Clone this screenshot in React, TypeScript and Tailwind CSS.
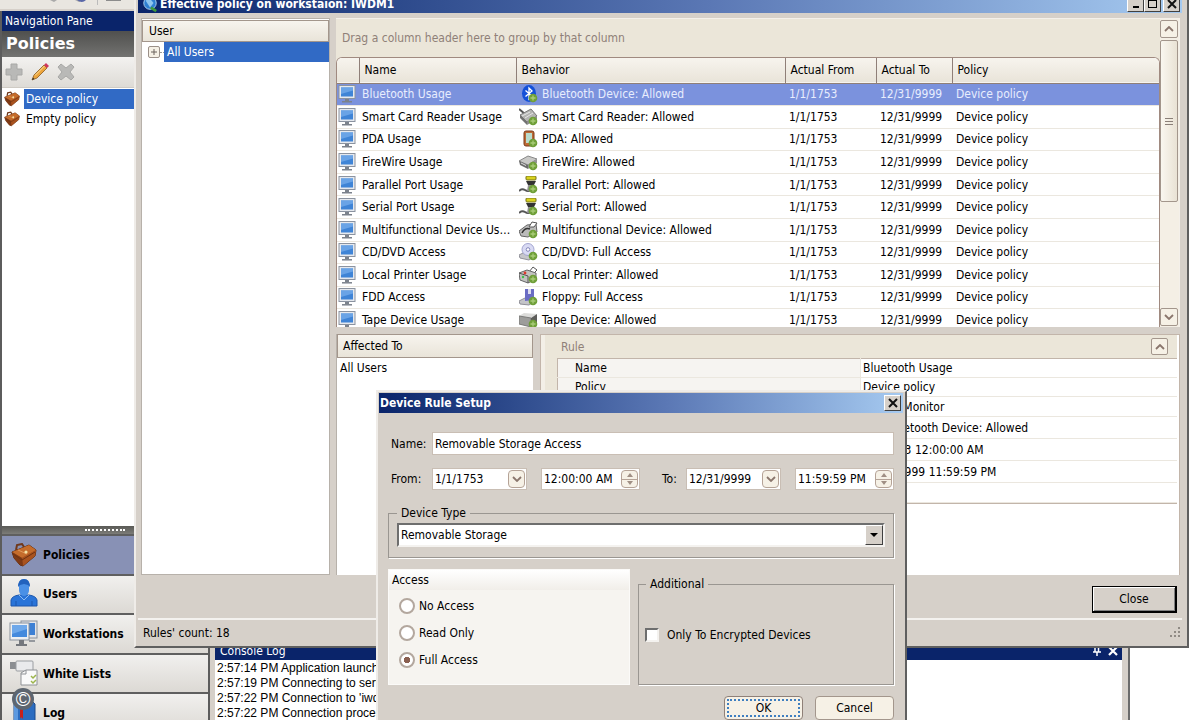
import { ReactNode, useState } from "react";

type DeviceKind =
  | "bluetooth"
  | "card"
  | "pda"
  | "firewire"
  | "port"
  | "multi"
  | "disc"
  | "printer"
  | "floppy"
  | "tape";

interface IRule {
  name: string;
  kind: DeviceKind;
  behavior: string;
}

const rules: IRule[] = [
  { name: "Bluetooth Usage", kind: "bluetooth", behavior: "Bluetooth Device: Allowed" },
  { name: "Smart Card Reader Usage", kind: "card", behavior: "Smart Card Reader: Allowed" },
  { name: "PDA Usage", kind: "pda", behavior: "PDA: Allowed" },
  { name: "FireWire Usage", kind: "firewire", behavior: "FireWire: Allowed" },
  { name: "Parallel Port Usage", kind: "port", behavior: "Parallel Port: Allowed" },
  { name: "Serial Port Usage", kind: "port", behavior: "Serial Port: Allowed" },
  { name: "Multifunctional Device Usage", kind: "multi", behavior: "Multifunctional Device: Allowed" },
  { name: "CD/DVD Access", kind: "disc", behavior: "CD/DVD: Full Access" },
  { name: "Local Printer Usage", kind: "printer", behavior: "Local Printer: Allowed" },
  { name: "FDD Access", kind: "floppy", behavior: "Floppy: Full Access" },
  { name: "Tape Device Usage", kind: "tape", behavior: "Tape Device: Allowed" },
];

interface IDetail {
  label: string;
  value: string;
  height: string;
  icon?: DeviceKind;
}

const details: IDetail[] = [
  { label: "Name", value: "Bluetooth Usage", height: "h-[19px]" },
  { label: "Policy", value: "Device policy", height: "h-[19px]" },
  { label: "", value: "Device Monitor", height: "h-5" },
  { label: "", value: "Bluetooth Device: Allowed", height: "h-[22px]", icon: "bluetooth" },
  { label: "", value: "1/1/1753 12:00:00 AM", height: "h-[22px]" },
  { label: "", value: "12/31/9999 11:59:59 PM", height: "h-[22px]" },
  { label: "", value: "", height: "h-5" },
];

const logLines = [
  "2:57:14 PM Application launched",
  "2:57:19 PM Connecting to server",
  "2:57:22 PM Connection to 'iwdm1'",
  "2:57:22 PM Connection process",
];

function Briefcase({ className }: { className: string }) {
  return (
    <svg viewBox="0 0 26 24" className={className} aria-hidden="true">
      <path d="M1 9 L18 2 L25 7 L24 13 L12 23 L9 22 L3 15 Z" fill="#9a4a1c" stroke="#5f2c12" />
      <path d="M1 9 L18 2 L25 7 L11 15 Z" fill="#c46c2c" />
      <path d="M11 15 L25 7 L24 13 L12 23 Z" fill="#a9531f" />
      <path d="M1 9 L11 15 L12 23 L9 22 L3 15 Z" fill="#7f3a15" />
      <path d="M5 7 L6 2 L11 1 L13 4" fill="none" stroke="#70381a" strokeWidth="2" />
      <path d="M2 11 L11 17 L24 9" fill="none" stroke="#6d3212" />
      <path d="M7 7 L16 11" stroke="#e19a5a" />
      <circle cx="15" cy="9" r="1.6" fill="#f3e2a6" />
    </svg>
  );
}

function Monitor() {
  return (
    <svg viewBox="0 0 18 18" className="ml-px h-[18px] w-[18px]" aria-hidden="true">
      <rect x="1" y="0.5" width="16" height="13" fill="#e6e9ee" stroke="#8b93a0" />
      <rect x="3" y="2.5" width="12" height="9" fill="#3f84d6" />
      <path d="M3 2.5h12v3L3 9z" fill="#69a3e6" />
      <path d="M7 14h4v2H7z" fill="#7c828c" />
      <path d="M4 16.8h10" stroke="#7c828c" strokeWidth="1.5" />
    </svg>
  );
}

function DeviceIcon({ kind }: { kind: DeviceKind }) {
  return (
    <svg viewBox="0 0 19 18" className="h-[18px] w-[19px] shrink-0" aria-hidden="true">
      {kind === "bluetooth" && (
        <>
          <ellipse cx="10" cy="8.5" rx="7" ry="8.5" fill="#1450d8" />
          <path d="M6.5 5.5 L13 11 L10 14 V3 L13 6 L6.5 11.5" fill="none" stroke="#fff" strokeWidth="1.3" />
        </>
      )}
      {kind === "card" && (
        <>
          <path d="M0 1 L6 6" stroke="#555" strokeWidth="2" />
          <path d="M1 7 L12 1 L18 8 L8 14 Z" fill="#b4b4b2" stroke="#777" />
          <path d="M3 8 L11 4 M6 10 L14 5" stroke="#e6e6e6" />
          <path d="M1 7 L8 14 V17 L1 10 Z" fill="#727272" />
          <path d="M8 14 L18 8 V11 L8 17 Z" fill="#8d8d8b" />
        </>
      )}
      {kind === "pda" && (
        <>
          <rect x="5" y="1" width="10" height="15" rx="2" fill="#bd6a35" stroke="#7a3b1a" />
          <rect x="7" y="3" width="6" height="10" fill="#b9dccd" />
        </>
      )}
      {kind === "firewire" && (
        <>
          <path d="M0 8 L9 3 L18 6 L9 12 Z" fill="#c9c9c7" stroke="#888" />
          <path d="M0 8 L9 12 V16 L1 12 Z" fill="#6b6b6b" />
          <path d="M9 12 L18 6 V10 L9 16 Z" fill="#949494" />
          <path d="M2 10 L7 12.5" stroke="#ddd" />
        </>
      )}
      {kind === "port" && (
        <>
          <path d="M0 15 Q3 12 6 14 T12 14" fill="none" stroke="#555" strokeWidth="2" />
          <rect x="7" y="0" width="10" height="4" rx="1" fill="#d8d21e" stroke="#77731a" />
          <path d="M7 5 H17 L15 9 H9 Z" fill="#333" />
          <path d="M9 9 H15 L16 15 H8 Z" fill="#8e8e8e" />
        </>
      )}
      {kind === "multi" && (
        <>
          <path d="M0 10 L8 4 L17 3 L18 11 L9 16 L2 15 Z" fill="#bbb" stroke="#666" />
          <path d="M10 6 L13 1 L18 2 L15 6 Z" fill="#fff" stroke="#555" />
          <path d="M3 12 Q6 6 11 8" fill="none" stroke="#333" strokeWidth="1.6" />
        </>
      )}
      {kind === "disc" && (
        <>
          <path d="M0 12 L6 9 L17 12 L10 17 L1 15 Z" fill="#c6c6ca" stroke="#92929a" />
          <circle cx="9" cy="6.5" r="6" fill="#d9daf3" stroke="#a3a5cf" />
          <circle cx="9" cy="6.5" r="1.8" fill="#fff" stroke="#8284b8" />
        </>
      )}
      {kind === "printer" && (
        <>
          <path d="M10 6 L14 1 L18 4 L14 8 Z" fill="#fff" stroke="#555" />
          <path d="M0 7 L8 4 L17 7 V13 L9 17 L1 14 Z" fill="#c2c2c0" stroke="#666" />
          <path d="M0 7 L9 10 V17" fill="none" stroke="#555" />
          <circle cx="6" cy="7" r="1.4" fill="#e03a2c" />
          <circle cx="4" cy="11" r="1.2" fill="#3fbf4a" />
        </>
      )}
      {kind === "floppy" && (
        <>
          <path d="M0 13 L6 10 L17 12 L10 17 L1 16 Z" fill="#c4c4c8" stroke="#8f8f96" />
          <path d="M6 1 L15 1 V12 L6 13 Z" fill="#6a6cc4" />
          <path d="M9 1 H12 V6 H9 Z" fill="#dcdcee" />
        </>
      )}
      {kind === "tape" && (
        <>
          <path d="M0 5 L5 2 L18 3 L12 7 Z" fill="#dcdcda" />
          <path d="M0 5 L12 7 V16 L0 13 Z" fill="#9d9d9b" stroke="#7b7b79" />
          <path d="M12 7 L18 3 V13 L12 16 Z" fill="#5d5d5b" />
        </>
      )}
      <circle cx="14" cy="13" r="4.3" fill="#6f9f38" />
      <path d="M11.5 13 H16.5 M14 10.5 V15.500" stroke="#a9cc78" strokeWidth="1.3" />
    </svg>
  );
}

function Chevron({ up = false }: { up?: boolean }) {
  return (
    <svg viewBox="0 0 10 6" className="h-1.5 w-2.5" aria-hidden="true">
      <path d={up ? "M1 5 L5 1 L9 5" : "M1 1 L5 5 L9 1"} fill="none" stroke="#8a766c" strokeWidth="1.8" />
    </svg>
  );
}

function NavIcon({ label }: { label: string }) {
  if (label === "Policies") return <Briefcase className="ml-0.5 h-6 w-[26px]" />;
  return (
    <svg viewBox="0 0 30 30" className="h-[30px] w-[30px]" aria-hidden="true">
      {label === "Users" && (
        <>
          <path d="M2 27 V21 Q3 17 10 16 H20 Q27 17 28 21 V27 Z" fill="#2a74d8" stroke="#1c57ad" />
          <path d="M10 6 Q10 0 15 0 Q20 0 20 6 V12 Q19 17 15 17 Q11 17 10 12 Z" fill="#4a90e6" />
          <path d="M9 8 Q9 0 15 0 Q21 0 21 8 L19 6 L15 5 L11 6 Z" fill="#2262bd" />
          <path d="M10 16 L15 21 L20 16" fill="none" stroke="#8dbcf3" />
          <path d="M7 22 V27 M23 22 V27" stroke="#1c57ad" />
        </>
      )}
      {label === "Workstations" && (
        <>
          <rect x="12" y="2" width="16" height="17" fill="#e2e5ea" stroke="#8a919c" />
          <rect x="14" y="4" width="12" height="12" fill="#3d80d4" />
          <rect x="1" y="4" width="19" height="17" fill="#eceff3" stroke="#8a919c" />
          <rect x="3" y="6" width="15" height="12" fill="#4389dd" />
          <path d="M3 6h15v4L3 15z" fill="#6ea8ea" />
          <path d="M10 21h5v4h-5z M7 25h11v2H7z" fill="#74777c" />
          <path d="M20 21h6v2h-6z" fill="#95989d" />
        </>
      )}
      {label === "White Lists" && (
        <>
          <rect x="1" y="3" width="6" height="7" fill="#8b8e92" />
          <rect x="7" y="2" width="17" height="10" rx="1" fill="#e9eaec" stroke="#9a9da1" />
          <path d="M12 14 L17 11 H28 V26 H12 Z" fill="#fafafa" stroke="#8f9296" />
          <path d="M17 11 V15 H12" fill="none" stroke="#8f9296" />
          <path d="M22 17 l2 2 l3 -3 M22 22 l2 2 l3 -3" fill="none" stroke="#9cb44b" strokeWidth="1.5" />
        </>
      )}
      {label === "Log" && (
        <>
          <path d="M5 4 L24 4 L26 6 V30 H5 Z" fill="#2b6cc0" stroke="#1d4a8c" />
          <path d="M5 4 V30 H9 V4 Z" fill="#5c99e0" />
          <path d="M11 8 h3 v13 l-2 -2 l-1 2 Z" fill="#c8201c" />
        </>
      )}
    </svg>
  );
}

function CloseGlyph() {
  return (
    <svg viewBox="0 0 10 10" className="h-2.5 w-2.5" aria-hidden="true">
      <path d="M1 1 L9 9 M9 1 L1 9" stroke="#111" strokeWidth="2" />
    </svg>
  );
}

function CaptionButton({ label, children }: { label: string; children: ReactNode }) {
  return (
    <button
      type="button"
      aria-label={label}
      className="flex h-4 w-[17px] items-center justify-center border border-t-white border-r-[#404040] border-b-[#404040] border-l-white bg-[#d6d0c9]"
    >
      {children}
    </button>
  );
}

function DateField({ id, label, value }: { id: string; label: string; value: string }) {
  return (
    <div className="flex h-[22px] w-[95px] items-center border border-[#c9beb4] bg-white pr-px">
      <input id={id} aria-label={label} defaultValue={value} className="w-full min-w-0 flex-1 pl-0.5 outline-none" />
      <button
        type="button"
        aria-label="Open calendar"
        className="flex h-[18px] w-[17px] shrink-0 items-center justify-center rounded-sm border border-[#b5a397] bg-[#f6f1e6]"
      >
        <Chevron />
      </button>
    </div>
  );
}

function TimeField({ label, value }: { label: string; value: string }) {
  return (
    <div className="flex h-[22px] w-[99px] items-center border border-[#c9beb4] bg-white pr-px">
      <input aria-label={label} defaultValue={value} className="w-full min-w-0 flex-1 pl-0.5 outline-none" />
      <div className="flex h-[18px] w-[17px] shrink-0 flex-col divide-y divide-[#b5a397] rounded-sm border border-[#b5a397] bg-[#f6f1e6]">
        <button type="button" aria-label="Increase" className="flex flex-1 items-center justify-center">
          <svg viewBox="0 0 6 4" className="h-1 w-1.5" aria-hidden="true">
            <path d="M0 4 L3 0 L6 4 Z" fill="#a08f84" />
          </svg>
        </button>
        <button type="button" aria-label="Decrease" className="flex flex-1 items-center justify-center">
          <svg viewBox="0 0 6 4" className="h-1 w-1.5" aria-hidden="true">
            <path d="M0 0 L3 4 L6 0 Z" fill="#a08f84" />
          </svg>
        </button>
      </div>
    </div>
  );
}

function MainWindow() {
  return (
    <div className="absolute top-0 right-[70px] -bottom-3 left-0 flex flex-col border-r-2 border-[#6b6b6b] bg-[#d6d0c9]">
      <div className="flex h-[11px] items-start border-b-2 border-[#d6d0c9] bg-[#e9e6e0] pl-[46px]">
        <svg viewBox="0 0 80 5" className="h-[5px] w-20" aria-hidden="true">
          <path d="M4 0 h7 l-3 2 z" fill="#a9a9a9" />
          <path d="M29 0 h7 l-3 2 z" fill="#a9a9a9" />
          <path d="M31 0 q5 4 9 0 z" fill="#5a68a8" />
          <path d="M51.5 0 v5" stroke="#bbb" />
          <path d="M60 0 h15 v1 h-15 z" fill="#8c8c8c" />
        </svg>
      </div>
      <div className="flex min-h-0 flex-1">
        <nav className="flex w-[210px] shrink-0 flex-col border-x-2 border-[#5c5c5c] bg-white">
          <div className="flex h-5 items-center bg-[#0a246a] pl-[3px] text-white">Navigation Pane</div>
          <h1 className="flex h-[26px] items-center bg-linear-to-b from-[#50504e] to-[#737371] pl-1 font-['DejaVu_Sans',sans-serif] text-base font-bold text-white">
            Policies
          </h1>
          <div className="flex h-[31px] items-center gap-2 border-b border-[#cfcbc4] bg-linear-to-b from-[#f3f2f0] to-[#dedbd6] pl-[3px]">
            <button type="button" aria-label="Add">
              <svg viewBox="0 0 18 18" className="h-[18px] w-[18px]" aria-hidden="true">
                <path d="M6 1h6v5h5v6h-5v5H6v-5H1V6h5z" fill="#b9b9b7" stroke="#a8a8a6" />
              </svg>
            </button>
            <button type="button" aria-label="Edit">
              <svg viewBox="0 0 18 18" className="h-[18px] w-[18px]" aria-hidden="true">
                <path d="M1 17 L3 12 L13 2 L16 5 L6 15 Z" fill="#eda53c" stroke="#8a5a1e" strokeWidth="0.8" />
                <path d="M13 2 L15 0 L18 3 L16 5 Z" fill="#d0365c" />
                <path d="M4 12.5 L13.5 3" stroke="#fbe0a0" />
                <path d="M1 17 L2 14.500 L3.500 16 Z" fill="#333" />
              </svg>
            </button>
            <button type="button" aria-label="Delete">
              <svg viewBox="0 0 18 18" className="h-[18px] w-[18px]" aria-hidden="true">
                <path
                  d="M4 1 L9 5 L14 1 L17 4 L13 9 L17 14 L14 17 L9 13 L4 17 L1 14 L5 9 L1 4 Z"
                  fill="#b9b9b7"
                  stroke="#a8a8a6"
                />
              </svg>
            </button>
          </div>
          <ul className="min-h-0 flex-1 pt-px">
            <li className="flex h-5 items-center gap-1">
              <Briefcase className="ml-0.5 h-4 w-4" />
              <button type="button" className="h-full flex-1 bg-[#316ac5] pl-0.5 text-left text-white">
                Device policy
              </button>
            </li>
            <li className="flex h-5 items-center gap-1">
              <Briefcase className="ml-0.5 h-4 w-4" />
              <button type="button" className="h-full flex-1 pl-0.5 text-left">
                Empty policy
              </button>
            </li>
          </ul>
          <div className="flex h-2 items-center bg-linear-to-b from-[#5a5a56] to-[#7c7c78] pl-[83px]">
            <div className="w-10 border-t-2 border-dotted border-white" />
          </div>
          <div className="grid h-[198px] grid-rows-5">
            {["Policies", "Users", "Workstations", "White Lists", "Log"].map((label) => (
              <button
                key={label}
                type="button"
                className={`relative flex items-center border-t-2 border-[#5f5f5f] pl-[7px] text-left font-bold ${
                  label === "Policies" ? "bg-[#8891b5]" : "bg-linear-to-b from-[#f1f0ee] to-[#dcd9d4]"
                }`}
              >
                <span className="flex w-[34px] items-center">
                  <NavIcon label={label} />
                </span>
                {label}
                {label === "Log" && (
                  <span className="absolute -top-1.5 left-2.5 flex h-[22px] w-[22px] items-center justify-center rounded-full bg-[#5d6670] font-['Liberation_Sans',sans-serif] text-xl leading-none font-normal text-white">
                    ©
                  </span>
                )}
              </button>
            ))}
          </div>
        </nav>
        <div className="flex flex-1 flex-col justify-end pr-1.5 pl-[5px]">
          <section className="flex h-[90px] flex-col bg-white">
            <div className="flex h-[18px] shrink-0 items-center gap-1.5 bg-[#0a246a] pr-1 pl-[5px] text-white">
              <h2 className="flex-1">Console Log</h2>
              <button type="button" aria-label="Pin">
                <svg viewBox="0 0 10 10" className="h-2.5 w-2.5" aria-hidden="true">
                  <path d="M3 0 V6 M6.5 0 V6 M1 6 H9 M5 6 V10" stroke="#fff" strokeWidth="1.5" />
                </svg>
              </button>
              <button type="button" aria-label="Close console">
                <svg viewBox="0 0 10 10" className="h-2.5 w-2.5" aria-hidden="true">
                  <path d="M1 1 L9 9 M9 1 L1 9" stroke="#fff" strokeWidth="2.2" />
                </svg>
              </button>
            </div>
            <div className="pt-px pl-0.5 font-['Liberation_Sans',Arial,sans-serif] text-xs leading-[15px]">
              {logLines.map((line) => (
                <p key={line}>{line}</p>
              ))}
            </div>
          </section>
        </div>
      </div>
    </div>
  );
}

function RulesGrid() {
  return (
    <div className="flex h-[309px] border-t border-r border-[#f4f0ea] bg-[#ebe6d9]">
      <div className="flex min-w-0 flex-1 flex-col">
        <div className="flex h-[38px] shrink-0 items-center pl-1.5 text-[#8f8078]">
          Drag a column header here to group by that column
        </div>
        <div className="min-h-0 flex-1 overflow-hidden rounded-t-md border-x border-t border-[#a08a80] bg-white">
          <table className="h-[274px] w-full table-fixed border-collapse text-left">
            <thead>
              <tr className="h-[25px] border-b border-[#8f7f78] bg-linear-to-b from-[#f7f4ee] to-[#e9e4d9]">
                <th aria-label="Type" className="w-[22px] border-r border-[#8f7f78]" />
                <th className="w-[157px] border-r border-[#8f7f78] pl-[5px] font-normal">Name</th>
                <th className="w-[269px] border-r border-[#8f7f78] pl-[5px] font-normal">Behavior</th>
                <th className="w-[91px] border-r border-[#8f7f78] pl-[5px] font-normal">Actual From</th>
                <th className="w-[76px] border-r border-[#8f7f78] pl-[5px] font-normal">Actual To</th>
                <th className="pl-[5px] font-normal">Policy</th>
              </tr>
            </thead>
            <tbody>
              {rules.map((rule, i) => (
                <tr
                  key={rule.name}
                  className={`border-b border-[#ebe7df] ${i === 0 ? "bg-[#7b92dd] text-[#e8edfd]" : ""}`}
                >
                  <td>
                    <Monitor />
                  </td>
                  <td className="truncate pl-[3px]">{rule.name}</td>
                  <td className="pl-[3px]">
                    <div className="flex items-center gap-1">
                      <DeviceIcon kind={rule.kind} />
                      {rule.behavior}
                    </div>
                  </td>
                  <td className="pl-1">1/1/1753</td>
                  <td className="pl-1">12/31/9999</td>
                  <td className="pl-1">Device policy</td>
                </tr>
              ))}
            </tbody>
          </table>
        </div>
      </div>
      <div className="flex w-[19px] flex-col gap-0.5 bg-[#f4efe5] py-px pr-px">
        <button
          type="button"
          aria-label="Scroll up"
          className="flex h-[18px] items-center justify-center rounded-xs border border-[#a3968c] bg-[#f6f1e6]"
        >
          <Chevron up />
        </button>
        <div className="flex h-[162px] items-center justify-center rounded-xs border border-[#a3968c] bg-linear-to-r from-[#faf7f0] to-[#e9e2d4]">
          <div className="h-[7px] w-2 border-y border-[#8a7f78] py-0.5">
            <div className="border-t border-[#8a7f78]" />
          </div>
        </div>
        <button
          type="button"
          aria-label="Scroll down"
          className="mt-auto flex h-[18px] items-center justify-center rounded-xs border border-[#a3968c] bg-[#f6f1e6]"
        >
          <Chevron />
        </button>
      </div>
    </div>
  );
}

function PolicyWindow() {
  return (
    <section className="absolute -top-[9px] right-[11px] bottom-[72px] left-[134px] flex flex-col border-2 border-t-white border-r-[#5f5f5f] border-b-[#5f5f5f] border-l-[#efece8] bg-[#d6d0c9] pt-px pr-[5px] pl-0.5">
      <header className="flex h-[19px] shrink-0 items-center bg-linear-to-r from-[#0a246a] via-[#5b78b5] via-55% to-[#a6caf0] pr-0.5 pl-1">
        <svg viewBox="0 0 18 18" className="mr-0.5 h-[18px] w-4" aria-hidden="true">
          <circle cx="9" cy="8" r="7" fill="#2e7fd2" stroke="#b9dcf6" />
          <path d="M4 5 L9 3 L13 8 L9 13 Z" fill="#8fc5ee" />
          <path d="M10 13 L16 17" stroke="#3e9a3a" strokeWidth="3" />
        </svg>
        <h2 className="flex-1 font-bold text-white">Effective policy on workstaion: IWDM1</h2>
        <CaptionButton label="Minimize">
          <span className="mt-1.5 h-0.5 w-1.5 bg-black" />
        </CaptionButton>
        <CaptionButton label="Maximize">
          <span className="h-[9px] w-[9px] border border-t-2 border-black" />
        </CaptionButton>
        <span className="w-0.5" />
        <CaptionButton label="Close window">
          <CloseGlyph />
        </CaptionButton>
      </header>
      <div className="flex min-h-0 flex-1 gap-1.5 pt-[5px] pr-0.5 pl-[3px]">
        <div className="flex w-[189px] shrink-0 flex-col border border-[#b7b1aa] bg-white pt-px">
          <div className="flex h-[22px] items-center border border-[#a3968c] bg-linear-to-b from-[#f7f4ee] to-[#e9e4d9] pl-1.5">
            User
          </div>
          <div className="flex h-5 items-center pl-1.5">
            <button
              type="button"
              aria-label="Expand All Users"
              className="flex h-3 w-3 items-center justify-center rounded-xs border border-[#9b9088] bg-[#f6f1e6]"
            >
              <svg viewBox="0 0 6 6" className="h-1.5 w-1.5" aria-hidden="true">
                <path d="M3 0 V6 M0 3 H6" stroke="#6b625c" />
              </svg>
            </button>
            <span className="w-1 border-t border-dotted border-[#999]" />
            <span className="flex h-full flex-1 items-center bg-[#316ac5] pl-[3px] text-white">All Users</span>
          </div>
        </div>
        <div className="flex min-w-0 flex-1 flex-col gap-[7px]">
          <RulesGrid />
          <div className="flex min-h-0 flex-1 gap-[7px]">
            <div className="w-[197px] shrink-0 border-l border-[#b7b1aa] bg-white">
              <div className="flex h-6 items-center border border-[#a3968c] bg-linear-to-b from-[#f7f4ee] to-[#e9e4d9] pl-[5px]">
                Affected To
              </div>
              <p className="pl-[3px] leading-5">All Users</p>
            </div>
            <div className="min-w-0 flex-1 border border-b-0 border-[#c2b5aa] bg-white">
              <div className="border-l-4 border-[#f3efe7] pr-0.5">
                <div className="flex h-[23px] items-center justify-between bg-[#ebe6d9] pr-[9px] pl-4 text-[#8f8078]">
                  Rule
                  <button
                    type="button"
                    aria-label="Collapse rule"
                    className="flex h-[17px] w-[17px] items-center justify-center rounded-xs border border-[#a3968c] bg-[#f6f1e6]"
                  >
                    <Chevron up />
                  </button>
                </div>
                <div className="border-b border-[#c2b5aa] bg-[#ebe6d9] pl-3">
                  <table className="w-full table-fixed border-t border-l border-[#c2b5aa] bg-white text-left">
                    <tbody>
                      {details.map((row, i) => (
                        <tr key={i} className={`${row.height} border-b border-[#ebe7df]`}>
                          <th className="w-[303px] border-r border-[#ebe7df] bg-[#f6f4f1] py-0 pl-[17px] leading-none font-normal">
                            {row.label}
                          </th>
                          <td className="py-0 pl-0.5 leading-none">
                            <div className="flex items-center gap-1">
                              {row.icon && <DeviceIcon kind={row.icon} />}
                              {row.value}
                            </div>
                          </td>
                        </tr>
                      ))}
                    </tbody>
                  </table>
                </div>
              </div>
            </div>
          </div>
        </div>
      </div>
      <div className="flex h-[43px] shrink-0 items-center justify-end pt-[5px] pr-[5px]">
        <button
          type="button"
          className="h-[27px] w-[85px] border border-r-2 border-b-2 border-black bg-[#d6d0c9] shadow-[inset_1px_1px_0_#fff,inset_-1px_-1px_0_#808080]"
        >
          Close
        </button>
      </div>
      <footer className="flex h-7 shrink-0 items-center justify-between border-t-2 border-[#f4f2ef] pl-[5px]">
        Rules' count: 18
        <svg viewBox="0 0 14 14" className="h-3.5 w-3.5" aria-hidden="true">
          <path
            d="M10 1h2v2h-2z M10 5h2v2h-2z M10 9h2v2h-2z M6 5h2v2H6z M6 9h2v2H6z M2 9h2v2H2z"
            fill="#8f8a84"
          />
        </svg>
      </footer>
    </section>
  );
}

function RuleDialog() {
  const [access, setAccess] = useState("Full Access");

  return (
    <form
      onSubmit={(e) => e.preventDefault()}
      className="absolute top-[390px] left-[376px] w-[531px] border-2 border-t-[#efece8] border-r-[#5f5f5f] border-b-[#5f5f5f] border-l-[#efece8] bg-[#d6d0c9] pt-px pr-0.5 pb-3 pl-px"
    >
      <header className="flex h-5 items-center bg-linear-to-r from-[#0a246a] via-[#5b78b5] via-55% to-[#a6caf0] pr-0.5 pl-px">
        <h2 className="flex-1 font-bold text-white">Device Rule Setup</h2>
        <CaptionButton label="Close dialog">
          <CloseGlyph />
        </CaptionButton>
      </header>
      <div className="pr-[9px] pl-[9px]">
        <div className="mt-[19px] flex items-center pl-[3px]">
          <label htmlFor="name" className="w-[41px]">
            Name:
          </label>
          <input
            id="name"
            defaultValue="Removable Storage Access"
            className="h-[23px] min-w-0 flex-1 border border-[#c9beb4] bg-white pl-0.5 outline-none"
          />
        </div>
        <div className="mt-[13px] flex items-center pl-[3px]">
          <label htmlFor="from" className="w-[41px]">
            From:
          </label>
          <DateField id="from" label="From" value="1/1/1753" />
          <span className="w-3.5" />
          <TimeField label="From time" value="12:00:00 AM" />
          <label htmlFor="to" className="w-[46px] pl-[22px]">
            To:
          </label>
          <DateField id="to" label="To" value="12/31/9999" />
          <span className="w-3.5" />
          <TimeField label="To time" value="11:59:59 PM" />
        </div>
        <fieldset className="mt-4 h-[52px] border border-[#9a9691] px-2 shadow-[1px_1px_0_#fff]">
          <legend className="px-1 leading-[14px]">Device Type</legend>
          <div className="relative mt-[3px]">
            <select
              aria-label="Device Type"
              className="h-6 w-full appearance-none border-2 border-t-[#6e6e6e] border-r-[#f4f2ef] border-b-[#f4f2ef] border-l-[#6e6e6e] bg-white pl-0.5 outline-none"
            >
              <option>Removable Storage</option>
            </select>
            <span className="pointer-events-none absolute top-0.5 right-0.5 flex h-5 w-[18px] items-center justify-center border border-t-white border-r-[#404040] border-b-[#404040] border-l-white bg-[#d6d0c9]">
              <svg viewBox="0 0 8 4" className="h-1 w-2" aria-hidden="true">
                <path d="M0 0 H8 L4 4 Z" fill="#000" />
              </svg>
            </span>
          </div>
        </fieldset>
        <div className="mt-[11px] flex h-[116px] gap-2">
          <div role="radiogroup" aria-label="Access" className="w-[242px] border border-[#fbfaf8] bg-[#f6f4f0]">
            <div className="h-5 bg-linear-to-b from-white to-[#f1eee9] pl-[3px] leading-5">Access</div>
            <div className="flex flex-col pt-0.5 pl-2.5">
              {["No Access", "Read Only", "Full Access"].map((option) => (
                <label key={option} className="flex h-[27px] items-center gap-1">
                  <input
                    type="radio"
                    name="access"
                    checked={access === option}
                    onChange={() => setAccess(option)}
                    className="h-4 w-4 appearance-none rounded-full border-2 border-[#b3a79e] bg-white checked:bg-[radial-gradient(circle,#8a5f50_0_3px,#fff_3px)]"
                  />
                  {option}
                </label>
              ))}
            </div>
          </div>
          <fieldset className="mt-2 flex-1 border border-[#9a9691] pl-1.5 shadow-[1px_1px_0_#fff]">
            <legend className="ml-px px-1 leading-[14px]">Additional</legend>
            <label className="mt-9 flex items-center gap-2">
              <input
                type="checkbox"
                className="h-3.5 w-3.5 appearance-none border-2 border-t-[#6e6e6e] border-r-[#f4f2ef] border-b-[#f4f2ef] border-l-[#6e6e6e] bg-white"
              />
              Only To Encrypted Devices
            </label>
          </fieldset>
        </div>
        <div className="mt-[11px] flex justify-end gap-3">
          <button type="submit" className="h-6 w-[79px] rounded-sm border border-[#8f8078] bg-[#f6f1e6] p-0.5">
            <span className="flex h-full items-center justify-center border-2 border-dotted border-[#3f7fc0]">OK</span>
          </button>
          <button type="button" className="h-6 w-[79px] rounded-sm border border-[#a3968c] bg-[#f6f1e6]">
            Cancel
          </button>
        </div>
      </div>
    </form>
  );
}

export default function App() {
  return (
    <main className="relative h-screen overflow-hidden bg-white font-['DejaVu_Sans_Condensed','DejaVu_Sans',sans-serif] text-xs text-black">
      <MainWindow />
      <PolicyWindow />
      <RuleDialog />
    </main>
  );
}
